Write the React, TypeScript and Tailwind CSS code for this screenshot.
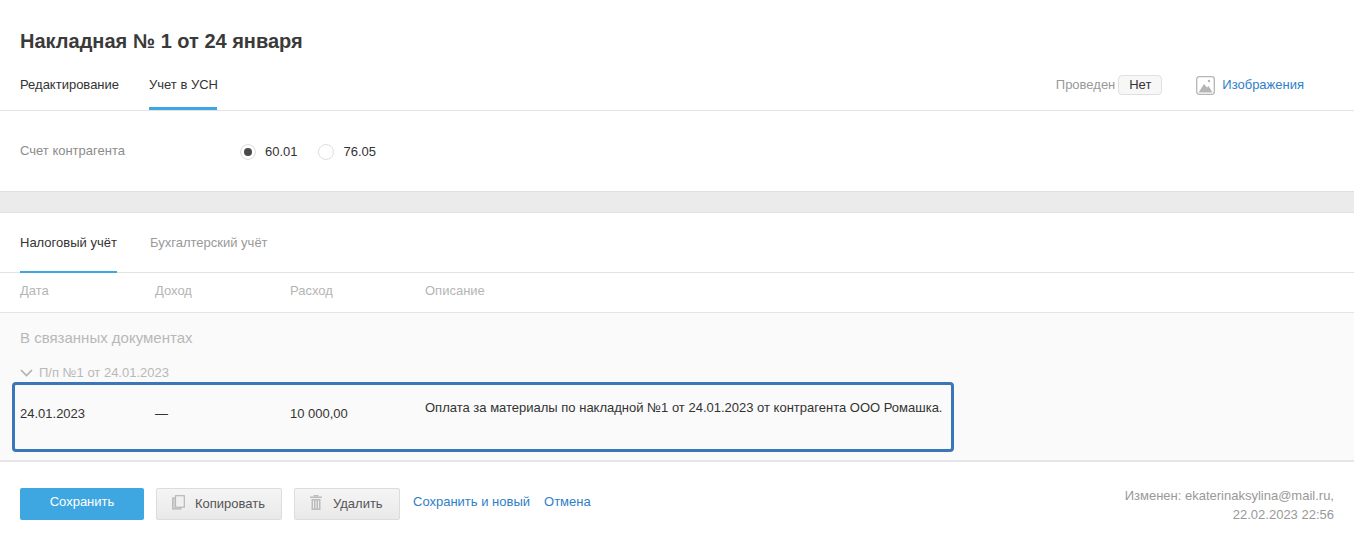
export default function App() {
  return (
    <div className="w-[1354px] h-[541px] overflow-hidden bg-white font-['Liberation_Sans',Arial,sans-serif] text-[13px] text-[#333333]">
      <div className="h-[111px] border-b border-[#e3e3e3] flex flex-col">
        <h1 className="pl-5 pt-[29px] h-[67px] text-[20px] leading-[24px] font-bold text-[#3a3a3a]">Накладная № 1 от 24 января</h1>
        <div className="flex-1 flex items-stretch pl-5 pr-[50px]">
          <div className="flex gap-[30px]">
            <div className="pt-[9px] leading-[17px] whitespace-nowrap">Редактирование</div>
            <div className="pt-[9px] leading-[17px] w-[68px] border-b-[3px] border-[#3ea6e0] whitespace-nowrap">Учет в УСН</div>
          </div>
          <div className="ml-auto flex items-start pt-[8px]">
            <span className="text-[#999999] leading-[20px] mr-[1px]">Проведен</span>
            <span className="ml-[2px] w-[44px] h-[20px] rounded-[4px] border border-[#e0e0e0] bg-[#f7f7f7] text-center leading-[18px]">Нет</span>
            <svg className="ml-[34px] mt-[1px]" width="19" height="19" viewBox="0 0 19 19">
              <rect x="0.7" y="0.7" width="17.6" height="17.6" rx="2.5" fill="#fff" stroke="#b5b5b5" strokeWidth="1.3" />
              <path d="M2.5 16.5 L8 8 L11 11.5 L12.5 10 L16.5 16.5 Z" fill="#b5b5b5" />
              <circle cx="13" cy="5" r="1.2" fill="#b5b5b5" />
            </svg>
            <a className="ml-[7px] leading-[20px] text-[#2f80c8]">Изображения</a>
          </div>
        </div>
      </div>

      <div className="h-[80px] pl-5 pt-[31px] flex items-start">
        <span className="w-[220px] leading-[17px] text-[#8c8c8c]">Счет контрагента</span>
        <label className="flex items-center gap-[9px] leading-[17px] mt-[1px]">
          <span className="w-4 h-4 rounded-full border border-[#dedede] flex items-center justify-center">
            <span className="w-2 h-2 rounded-full bg-[#4a4a4a]" />
          </span>
          60.01
        </label>
        <label className="flex items-center gap-[10px] leading-[17px] mt-[1px] ml-[20px]">
          <span className="w-4 h-4 rounded-full border border-[#dedede]" />
          76.05
        </label>
      </div>

      <div className="h-[22px] bg-[#ebebeb] border-y border-[#e0e0e0]" />

      <div className="h-[60px] border-b border-[#e3e3e3] flex pl-5 gap-[33px]">
        <div className="w-[97px] pt-[21px] leading-[17px] border-b-[2px] border-[#3ea6e0] -mb-px">Налоговый учёт</div>
        <div className="pt-[21px] leading-[17px] text-[#999999]">Бухгалтерский учёт</div>
      </div>

      <div className="h-[40px] border-b border-[#e3e3e3] flex pl-5 pt-[9px] leading-[17px] text-[#b5b5b5]">
        <span className="w-[135px]">Дата</span>
        <span className="w-[135px]">Доход</span>
        <span className="w-[135px]">Расход</span>
        <span>Описание</span>
      </div>

      <div className="h-[149px] bg-[#fafafa] border-b-2 border-[#e6e6e6]">
        <div className="pl-5 pt-[16px] text-[15px] leading-[18px] text-[#b8b8b8]">В связанных документах</div>
        <div className="pl-5 mt-[17px] h-[17px] flex items-center gap-[6px] leading-[17px] text-[#b8b8b8]">
          <svg width="13" height="8" viewBox="0 0 13 8" fill="none" stroke="#b0b0b0" strokeWidth="1.6">
            <path d="M1 1 L6.5 6.5 L12 1" />
          </svg>
          П/п №1 от 24.01.2023
        </div>
        <div className="ml-3 mt-[1px] w-[942px] h-[70px] rounded-[4px] border-[3px] border-[#3a76b8] flex pl-[5px] text-[#333333]">
          <span className="w-[135px] pt-[20px] leading-[17px]">24.01.2023</span>
          <span className="w-[135px] pt-[20px] leading-[17px]">—</span>
          <span className="w-[135px] pt-[20px] leading-[17px]">10 000,00</span>
          <span className="pt-[14px] leading-[17px] whitespace-nowrap">Оплата за материалы по накладной №1 от 24.01.2023 от контрагента ООО Ромашка.</span>
        </div>
      </div>

      <div className="flex pl-5 pr-5 pt-[26px]">
        <button className="w-[124px] h-[32px] rounded-[2px] bg-[#3ea6e0] text-white pb-[5px]">Сохранить</button>
        <button className="ml-3 w-[126px] h-[32px] rounded-[2px] border border-[#dcdcdc] bg-gradient-to-b from-[#f5f5f5] to-[#e9e9e9] flex items-center pl-[15px] text-[#555555]">
          <svg width="13" height="15" className="mb-[3px]" viewBox="0 0 13 15" fill="none" stroke="#b8b8b8" strokeWidth="1.2">
            <rect x="0.7" y="3" width="8" height="11" fill="#d4d4d4" />
            <rect x="3.5" y="0.7" width="8.8" height="11.5" fill="#f0f0f0" />
          </svg>
          <span className="ml-[10px] pb-[1px]">Копировать</span>
        </button>
        <button className="ml-3 w-[106px] h-[32px] rounded-[2px] border border-[#dcdcdc] bg-gradient-to-b from-[#f5f5f5] to-[#e9e9e9] flex items-center pl-[15px] text-[#555555]">
          <svg width="12" height="15" className="mb-[3px]" viewBox="0 0 12 15" fill="#bcbcbc">
            <rect x="0" y="1.5" width="12" height="1.5" />
            <rect x="3.5" y="0" width="5" height="1.5" />
            <path d="M1.5 4 H10.5 V15 H1.5 Z M3 5.5 V13.5 H4 V5.5 Z M5.5 5.5 V13.5 H6.5 V5.5 Z M8 5.5 V13.5 H9 V5.5 Z" fillRule="evenodd" />
          </svg>
          <span className="ml-[11px] pb-[1px]">Удалить</span>
        </button>
        <a className="ml-[13px] pt-[5px] leading-[17px] text-[#2f80c8]">Сохранить и новый</a>
        <a className="ml-[14px] pt-[5px] leading-[17px] text-[#2f80c8]">Отмена</a>
        <div className="ml-auto -mt-[2px] text-right leading-[19px] text-[#999999]">
          <div>Изменен: ekaterinaksylina@mail.ru,</div>
          <div>22.02.2023 22:56</div>
        </div>
      </div>
    </div>
  );
}
